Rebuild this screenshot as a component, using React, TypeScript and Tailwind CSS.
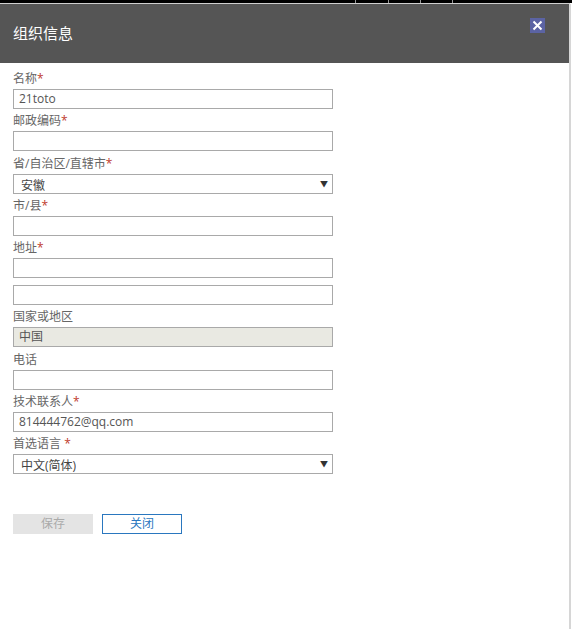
import React from 'react';

const font = { fontFamily: '"Open Sans", "Noto Sans CJK SC", sans-serif' };

const Label: React.FC<{ text: string; required?: boolean; spaced?: boolean; tall?: boolean }> = ({
  text,
  required,
  spaced,
  tall,
}) => (
  <div className={`${tall ? 'h-[23px] pt-[5px]' : 'h-[22px] pt-[4px]'} text-[12px] leading-[16px] text-[#666]`}>
    {text}
    {required && <span className="text-[#c0392b]">{spaced ? ' *' : '*'}</span>}
  </div>
);

const Input: React.FC<{ value?: string; disabled?: boolean }> = ({ value = '', disabled }) => (
  <div
    className={`h-[20px] w-[320px] border border-[#a9a9a9] px-[5px] text-[12px] leading-[18px] text-[#555] ${
      disabled ? 'bg-[#e9e9e2]' : 'bg-white'
    }`}
  >
    {value}
  </div>
);

const Select: React.FC<{ value: string }> = ({ value }) => (
  <div className="flex h-[20px] w-[320px] items-center justify-between border border-[#a9a9a9] bg-white pl-[7px] pr-[4px] text-[12px] text-[#444]">
    <span className="h-[17px] overflow-hidden leading-[20px]">{value}</span>
    <span className="text-[8px] leading-none text-[#333]">▼</span>
  </div>
);

export default function App() {
  return (
    <div className="h-[629px] w-[572px] overflow-hidden bg-white" style={font}>
      {/* page behind the dialog */}
      <div className="relative h-[3px] bg-black">
        <div className="absolute left-[355px] top-0 h-[3px] w-px bg-[#999]" />
        <div className="absolute left-[388px] top-0 h-[3px] w-px bg-[#999]" />
        <div className="absolute left-[420px] top-0 h-[3px] w-px bg-[#999]" />
        <div className="absolute left-[452px] top-0 h-[3px] w-px bg-[#999]" />
      </div>
      <div className="h-px w-[570px] bg-[#cfcfcf]" />

      <div className="flex h-[629px] w-[571px] flex-col border-r-2 border-[#d6d6d6]">
        <div className="flex h-[59px] items-center justify-between bg-[#555555] pl-[13px] pr-[24px]">
          <h1 className="text-[15px] text-white">组织信息</h1>
          <div className="-mt-[16px] flex h-[15px] w-[15px] items-center justify-center bg-[#5b63a3]">
            <svg width="11" height="11" viewBox="0 0 11 11">
              <path d="M1.5 1.5 L9.5 9.5 M9.5 1.5 L1.5 9.5" stroke="white" strokeWidth="2" />
            </svg>
          </div>
        </div>

        <div className="flex flex-col px-[13px] pt-[4px]">
          <Label text="名称" required />
          <Input value="21toto" />
          <Label text="邮政编码" required />
          <Input />
          <Label text="省/自治区/直辖市" required tall />
          <Select value="安徽" />
          <Label text="市/县" required />
          <Input />
          <Label text="地址" required />
          <Input />
          <div className="h-[7px]" />
          <Input />
          <Label text="国家或地区" />
          <Input value="中国" disabled />
          <Label text="电话" tall />
          <Input />
          <Label text="技术联系人" required />
          <Input value="814444762@qq.com" />
          <Label text="首选语言" required spaced />
          <Select value="中文(简体)" />

          <div className="mt-[40px] flex gap-[9px]">
            <button className="h-[20px] w-[80px] bg-[#e4e4e4] text-[12px] text-[#aaa]">保存</button>
            <button className="h-[20px] w-[80px] border border-[#2a77bf] bg-white text-[12px] text-[#2a77bf]">关闭</button>
          </div>
        </div>
      </div>
    </div>
  );
}
